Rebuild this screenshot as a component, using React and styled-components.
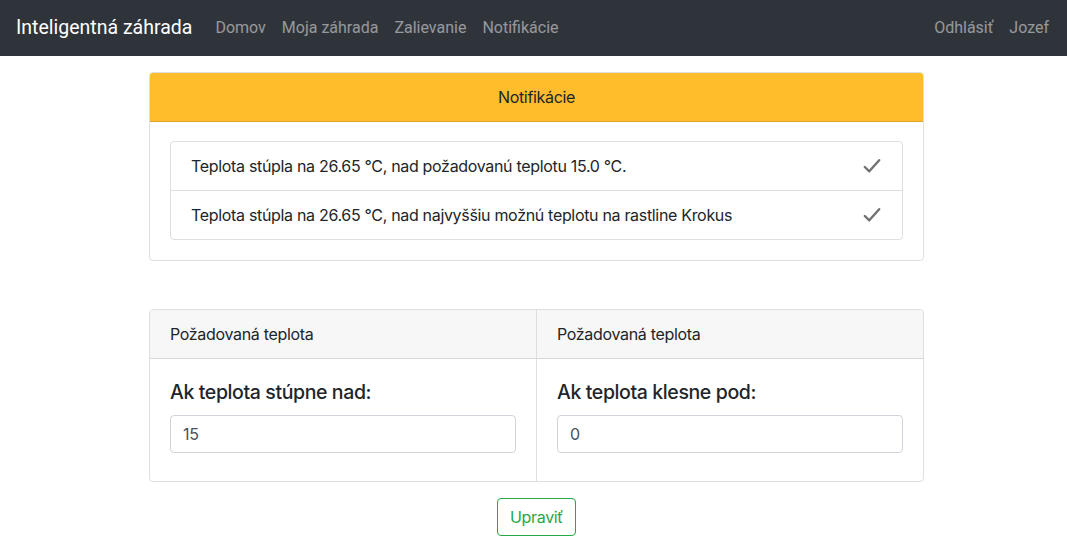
import React, { useState } from "react";
import styled, { createGlobalStyle } from "styled-components";

const GlobalStyle = createGlobalStyle`
  body {
    margin: 0;
    font-family: Inter, "Noto Sans", "Liberation Sans", sans-serif;
    font-size: 16px;
    line-height: 1.5;
    letter-spacing: -0.02em;
    color: #212529;
    background: #fff;
  }
  * {
    box-sizing: border-box;
  }
`;

const Navbar = styled.nav`
  height: 56px;
  background: #2f343a;
  display: flex;
  align-items: center;
  padding: 0 16px;
  font-family: Roboto, "Liberation Sans", sans-serif;
  letter-spacing: 0;
`;

const Brand = styled.span`
  color: #fff;
  font-size: 19.5px;
  margin-right: 15px;
`;

const NavList = styled.div`
  display: flex;
  margin-left: ${(p) => (p.right ? "auto" : "0")};
`;

const NavLink = styled.a`
  color: rgba(255, 255, 255, 0.5);
  font-size: 16px;
  padding: 0 8px;
  text-decoration: none;
  cursor: pointer;

  &:last-child {
    padding-right: 2px;
  }
`;

const Container = styled.main`
  width: 775px;
  margin: 16px 0 0 149px;
  display: flex;
  flex-direction: column;
`;

const Card = styled.section`
  border: 1px solid rgba(0, 0, 0, 0.125);
  border-radius: 4px;
  overflow: hidden;
  margin-bottom: ${(p) => p.gap || "0"};
`;

const WarningHeader = styled.div`
  background: #ffbc2b;
  height: 49px;
  display: flex;
  align-items: center;
  justify-content: center;
  border-bottom: 1px solid rgba(0, 0, 0, 0.125);
`;

const CardBody = styled.div`
  padding: 19px 20px 20px;
`;

const ListGroup = styled.ul`
  list-style: none;
  margin: 0;
  padding: 0;
  border: 1px solid rgba(0, 0, 0, 0.125);
  border-radius: 4px;
`;

const ListItem = styled.li`
  height: 48px;
  display: flex;
  align-items: center;
  justify-content: space-between;
  padding: 0 20px;
  font-size: 16px;

  & + & {
    height: 49px;
    border-top: 1px solid rgba(0, 0, 0, 0.125);
  }
`;

const CheckButton = styled.button`
  background: none;
  border: none;
  padding: 0;
  display: flex;
  cursor: pointer;
`;

const Columns = styled.div`
  display: grid;
  grid-template-columns: 1fr 1fr;
`;

const Column = styled.div`
  & + & {
    border-left: 1px solid rgba(0, 0, 0, 0.125);
  }
`;

const GreyHeader = styled.div`
  background: #f7f7f7;
  height: 49px;
  display: flex;
  align-items: center;
  padding: 0 20px;
  font-size: 16px;
  border-bottom: 1px solid rgba(0, 0, 0, 0.125);
`;

const ColumnBody = styled.div`
  padding: 21px 20px 28px;
`;

const Label = styled.h5`
  font-size: 19.5px;
  font-weight: 500;
  letter-spacing: -0.02em;
  margin: 0 0 11px;
  line-height: 24px;
`;

const Input = styled.input`
  width: 346px;
  height: 38px;
  border: 1px solid #ced4da;
  border-radius: 4px;
  padding: 0 12px;
  font-family: inherit;
  font-size: 16px;
  letter-spacing: inherit;
  color: #495057;
`;

const Actions = styled.div`
  display: flex;
  justify-content: center;
  margin-top: 16px;
`;

const OutlineButton = styled.button`
  height: 38px;
  padding: 0 12px;
  border: 1px solid #28a745;
  border-radius: 4px;
  background: #fff;
  color: #28a745;
  font-family: inherit;
  font-size: 16px;
  letter-spacing: inherit;
  cursor: pointer;
`;

const Check = () => (
  <svg width="20" height="20" viewBox="0 0 20 20">
    <path
      d="M2.8 11 L7.3 15.3 L17.2 4.2"
      fill="none"
      stroke="#727272"
      strokeWidth="2.4"
      strokeLinecap="round"
      strokeLinejoin="round"
    />
  </svg>
);

const notifications = [
  "Teplota stúpla na 26.65 °C, nad požadovanú teplotu 15.0 °C.",
  "Teplota stúpla na 26.65 °C, nad najvyššiu možnú teplotu na rastline Krokus",
];

export default function App() {
  const [upper, setUpper] = useState("15");
  const [lower, setLower] = useState("0");

  return (
    <>
      <GlobalStyle />
      <Navbar>
        <Brand>Inteligentná záhrada</Brand>
        <NavList>
          <NavLink>Domov</NavLink>
          <NavLink>Moja záhrada</NavLink>
          <NavLink>Zalievanie</NavLink>
          <NavLink>Notifikácie</NavLink>
        </NavList>
        <NavList right>
          <NavLink>Odhlásiť</NavLink>
          <NavLink>Jozef</NavLink>
        </NavList>
      </Navbar>
      <Container>
        <Card gap="48px">
          <WarningHeader>Notifikácie</WarningHeader>
          <CardBody>
            <ListGroup>
              {notifications.map((text) => (
                <ListItem key={text}>
                  <span>{text}</span>
                  <CheckButton>
                    <Check />
                  </CheckButton>
                </ListItem>
              ))}
            </ListGroup>
          </CardBody>
        </Card>
        <Card>
          <Columns>
            <Column>
              <GreyHeader>Požadovaná teplota</GreyHeader>
              <ColumnBody>
                <Label>Ak teplota stúpne nad:</Label>
                <Input value={upper} onChange={(e) => setUpper(e.target.value)} />
              </ColumnBody>
            </Column>
            <Column>
              <GreyHeader>Požadovaná teplota</GreyHeader>
              <ColumnBody>
                <Label>Ak teplota klesne pod:</Label>
                <Input value={lower} onChange={(e) => setLower(e.target.value)} />
              </ColumnBody>
            </Column>
          </Columns>
        </Card>
        <Actions>
          <OutlineButton>Upraviť</OutlineButton>
        </Actions>
      </Container>
    </>
  );
}
